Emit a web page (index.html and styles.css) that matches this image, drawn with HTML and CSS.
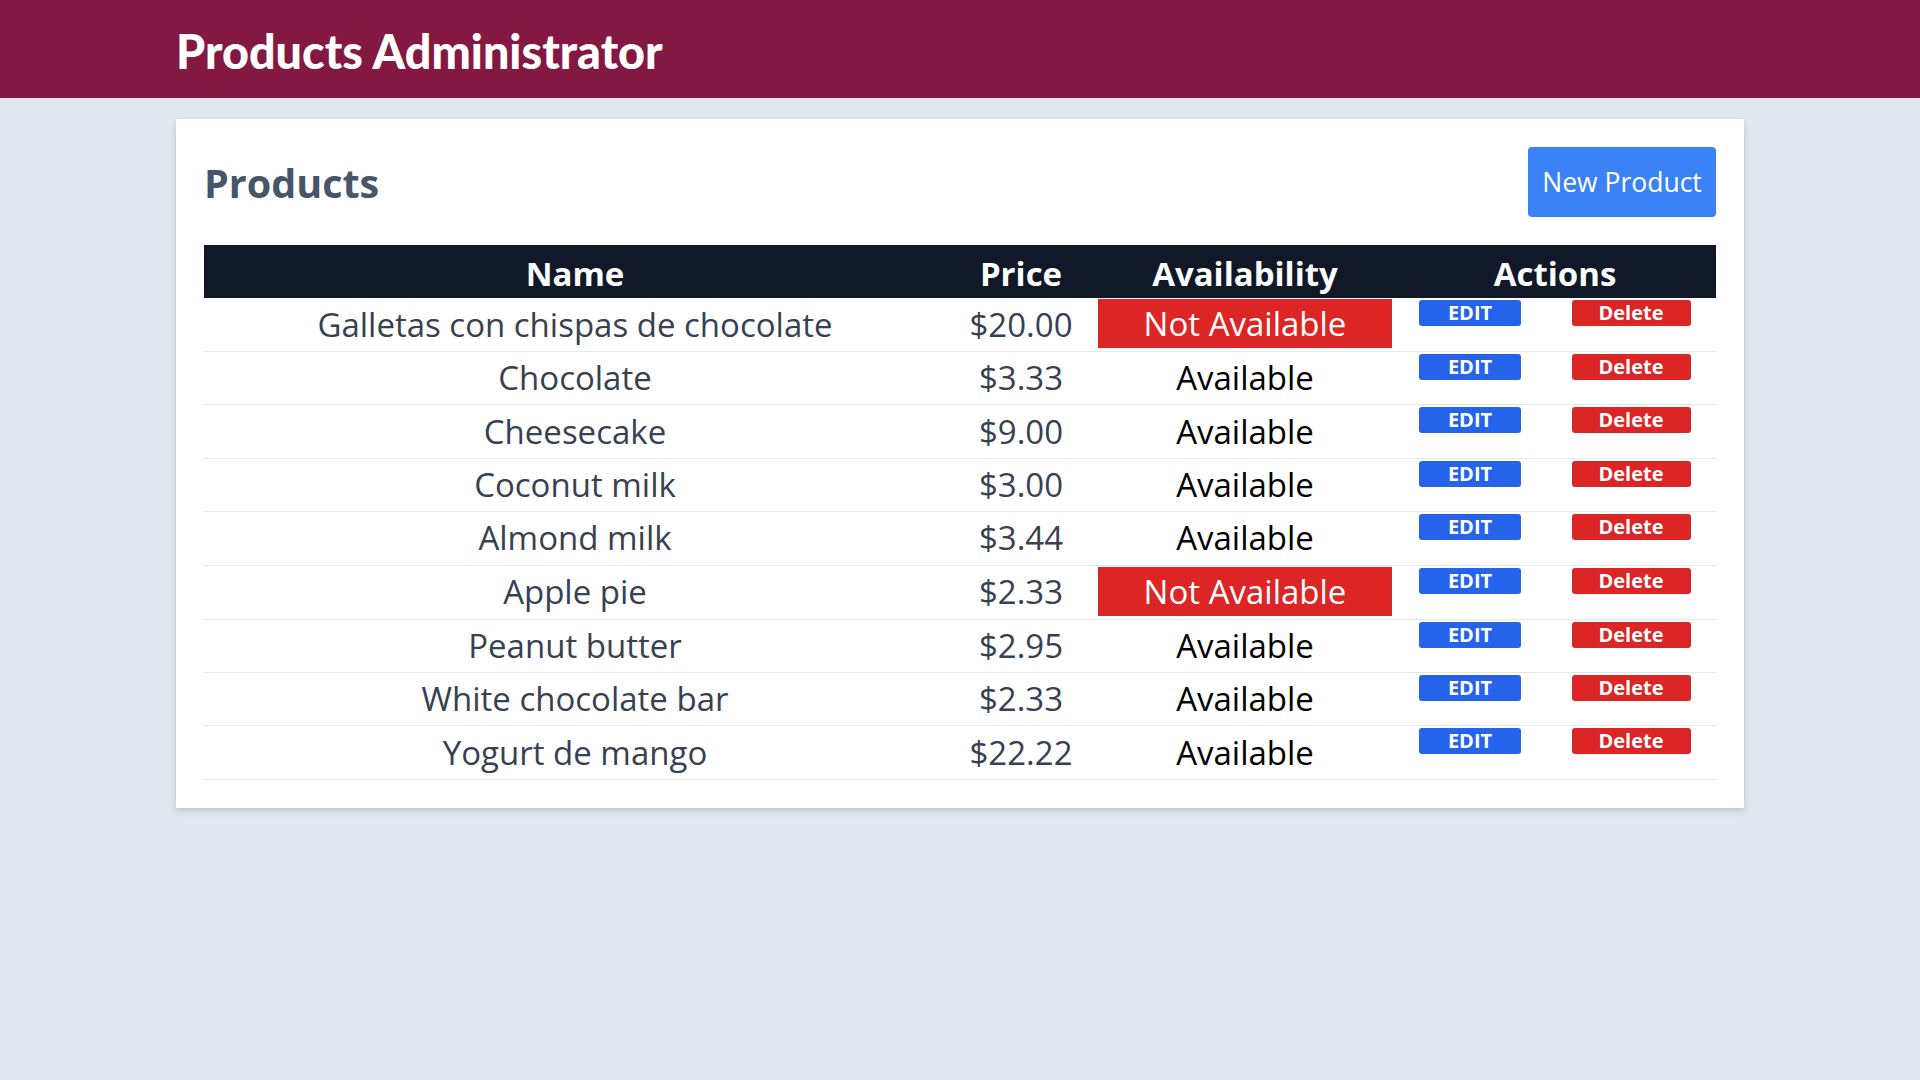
FILE: index.html
```html
<!DOCTYPE html>
<html lang="en">
<head>
<meta charset="utf-8">
<title>Products Administrator</title>
<link rel="stylesheet" href="styles.css">
</head>
<body>
<header class="topbar">
  <h1 class="brand">Products Administrator</h1>
</header>
<main class="card">
  <div class="card-head">
    <h2 class="title">Products</h2>
    <button class="btn-new">New Product</button>
  </div>
  <table class="products">
    <colgroup>
      <col class="c-name"><col class="c-price"><col class="c-avail"><col class="c-edit"><col class="c-del">
    </colgroup>
    <thead>
      <tr><th>Name</th><th>Price</th><th>Availability</th><th colspan="2">Actions</th></tr>
    </thead>
    <tbody>
      <tr><td class="name">Galletas con chispas de chocolate</td><td class="price">$20.00</td><td class="avail"><div class="na">Not Available</div></td><td class="act"><button class="btn-edit">EDIT</button></td><td class="act"><button class="btn-del">Delete</button></td></tr>
      <tr><td class="name">Chocolate</td><td class="price">$3.33</td><td class="avail">Available</td><td class="act"><button class="btn-edit">EDIT</button></td><td class="act"><button class="btn-del">Delete</button></td></tr>
      <tr><td class="name">Cheesecake</td><td class="price">$9.00</td><td class="avail">Available</td><td class="act"><button class="btn-edit">EDIT</button></td><td class="act"><button class="btn-del">Delete</button></td></tr>
      <tr><td class="name">Coconut milk</td><td class="price">$3.00</td><td class="avail">Available</td><td class="act"><button class="btn-edit">EDIT</button></td><td class="act"><button class="btn-del">Delete</button></td></tr>
      <tr><td class="name">Almond milk</td><td class="price">$3.44</td><td class="avail">Available</td><td class="act"><button class="btn-edit">EDIT</button></td><td class="act"><button class="btn-del">Delete</button></td></tr>
      <tr><td class="name">Apple pie</td><td class="price">$2.33</td><td class="avail"><div class="na">Not Available</div></td><td class="act"><button class="btn-edit">EDIT</button></td><td class="act"><button class="btn-del">Delete</button></td></tr>
      <tr><td class="name">Peanut butter</td><td class="price">$2.95</td><td class="avail">Available</td><td class="act"><button class="btn-edit">EDIT</button></td><td class="act"><button class="btn-del">Delete</button></td></tr>
      <tr><td class="name">White chocolate bar</td><td class="price">$2.33</td><td class="avail">Available</td><td class="act"><button class="btn-edit">EDIT</button></td><td class="act"><button class="btn-del">Delete</button></td></tr>
      <tr><td class="name">Yogurt de mango</td><td class="price">$22.22</td><td class="avail">Available</td><td class="act"><button class="btn-edit">EDIT</button></td><td class="act"><button class="btn-del">Delete</button></td></tr>
    </tbody>
  </table>
</main>
</body>
</html>
```

FILE: styles.css
```css
* { box-sizing: border-box; }
html, body { margin: 0; padding: 0; }
body {
  background: #e2e8f0;
  font-family: "Open Sans", "Noto Sans", sans-serif;
  min-height: 1080px;
}
.topbar {
  background: #831843;
  height: 98px;
  display: flex;
  align-items: center;
  padding: 0 176px;
}
.brand {
  margin: 0;
  color: #fff;
  font-family: "Lato", "Open Sans", sans-serif;
  font-weight: 900;
  font-size: 46.7px;
  line-height: 1;
  letter-spacing: 0;
  padding-top: 4px;
}
.card {
  margin: 21px 176px 0;
  background: #fff;
  padding: 28px;
  box-shadow: 0 4px 8px rgba(15, 23, 42, 0.12), 0 1px 3px rgba(15, 23, 42, 0.08);
}
.card-head {
  display: flex;
  justify-content: space-between;
  align-items: center;
  height: 70px;
  margin-bottom: 28px;
}
.title {
  margin: 0;
  color: #475569;
  font-weight: 700;
  font-size: 39.5px;
  line-height: 1;
  padding-top: 4px;
}
.btn-new {
  height: 70px;
  width: 188px;
  border: 0;
  border-radius: 4px;
  background: #3b82f6;
  color: #fff;
  font-family: "Open Sans", sans-serif;
  font-size: 26.5px;
  padding: 0;
}
.products {
  width: 100%;
  border-collapse: collapse;
  table-layout: fixed;
}
.c-name { width: 742px; }
.c-price { width: 150px; }
.c-avail { width: 298px; }
.c-edit { width: 152px; }
.c-del { width: 170px; }
.products thead tr { background: #111827; }
.products th {
  color: #fff;
  font-weight: 700;
  font-size: 33px;
  height: 53px;
  padding: 0;
  line-height: 36px;
  padding-top: 4px;
}
.products td {
  height: 53.4px;
  padding: 0;
  text-align: center;
  font-size: 33px;
  line-height: 36px;
  border-bottom: 1.5px solid #e5e7eb;
  vertical-align: middle;
}
.name, .price { color: #374151; }
.avail { color: #000; }
.na {
  background: #dc2626;
  color: #fff;
  height: 49px;
  line-height: 49px;
  margin: 1px 2px 3px;
}
.products td.act {
  vertical-align: top;
  padding-top: 2px;
}
.btn-edit, .btn-del {
  display: block;
  margin: 0 auto;
  height: 26px;
  border: 0;
  border-radius: 3px;
  color: #fff;
  font-family: "Open Sans", sans-serif;
  font-weight: 700;
  font-size: 20px;
  line-height: 26px;
  padding: 0;
}
.btn-edit { background: #2563eb; width: 102px; }
.btn-del { background: #dc2626; width: 119px; }
```
